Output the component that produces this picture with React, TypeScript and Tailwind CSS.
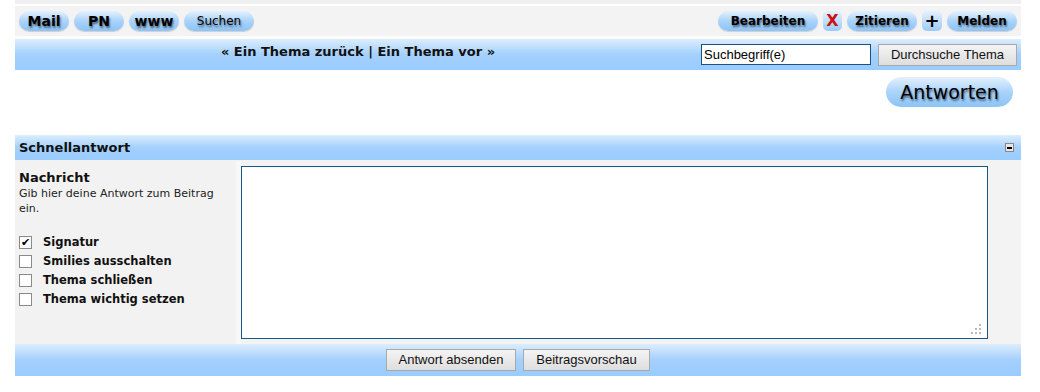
import React from 'react';

const pill =
  "h-[20px] rounded-full bg-gradient-to-b from-[#e4f1fd] via-[#a9d3fb] to-[#8cc4f7] shadow-[0_1px_1px_rgba(0,0,0,0.15)] flex items-center justify-center font-bold text-[12px] text-black [text-shadow:1px_2px_2px_#4f6378]";

const grayBtn =
  "h-[22px] border border-[#a9a9a9] bg-gradient-to-b from-[#f4f4f4] to-[#dedede] text-[13px] text-[#111] flex items-center justify-center";

const blueBar = "bg-gradient-to-b from-[#dcedfd] via-[#a4d0fc] to-[#99ccff]";

function Check({ checked }: { checked?: boolean }) {
  return (
    <span className="w-[13px] h-[13px] border border-[#8a8a8a] bg-white flex items-center justify-center text-[11px] leading-none text-black shrink-0">
      {checked ? "✔" : ""}
    </span>
  );
}

export default function App() {
  const options = [
    { label: "Signatur", checked: true },
    { label: "Smilies ausschalten" },
    { label: "Thema schließen" },
    { label: "Thema wichtig setzen" },
  ];

  return (
    <div className="min-h-[392px] bg-white" style={{ fontFamily: '"DejaVu Sans", Verdana, sans-serif' }}>
      <div className="w-[1006px] ml-[15px]">
        {/* top toolbar */}
        <div className="h-[4px] bg-[#efefef]"></div>
        <div className="h-[2px] bg-white"></div>
        <div className="h-[30px] bg-[#f3f3f3] flex items-center justify-between pl-[4px] pr-[4px]">
          <div className="flex items-center gap-[5px]">
            <div className={pill + " w-[50px] text-[14px]"}>Mail</div>
            <div className={pill + " w-[50px] text-[14px]"}>PN</div>
            <div className={pill + " w-[50px] text-[14px]"}>www</div>
            <div className={pill + " w-[70px] !font-normal"}>Suchen</div>
          </div>
          <div className="flex items-center gap-[5px]">
            <div className={pill + " w-[100px]"}>Bearbeiten</div>
            <div className="w-[19px] h-[20px] rounded-[5px] bg-gradient-to-b from-[#e4f1fd] to-[#9ccbf7] flex items-center justify-center text-[#cc1111] font-bold text-[16px]">
              X
            </div>
            <div className={pill + " w-[70px]"}>Zitieren</div>
            <div className="w-[20px] h-[20px] rounded-[5px] bg-gradient-to-b from-[#e4f1fd] to-[#9ccbf7] flex items-center justify-center text-black font-bold text-[18px] leading-none">
              +
            </div>
            <div className={pill + " w-[70px]"}>Melden</div>
          </div>
        </div>
        <div className="h-[3px] bg-white"></div>

        {/* navigation bar */}
        <div className={blueBar + " h-[31px] flex items-center"}>
          <div className="w-[686px] flex justify-center font-bold text-[13px] text-[#111] pt-[1px] pb-[6px]">
            « Ein Thema zurück | Ein Thema vor »
          </div>
          <div
            className="flex items-center gap-[7px]"
            style={{ fontFamily: '"Liberation Sans", Arial, sans-serif' }}
          >
            <div className="w-[170px] h-[21px] border border-[#1f4f7f] bg-white text-[13px] text-black pl-[2px] flex items-center">
              Suchbegriff(e)
            </div>
            <div className={grayBtn + " w-[139px]"}>Durchsuche Thema</div>
          </div>
        </div>

        {/* reply button */}
        <div className="h-[65px] flex justify-end items-start pt-[7px] pr-[8px]">
          <div className="w-[127px] h-[30px] rounded-full bg-gradient-to-b from-[#e4f1fd] via-[#a9d3fb] to-[#8cc4f7] flex items-center justify-center text-[19px] text-black [text-shadow:1px_2px_2px_#4f6378]">
            Antworten
          </div>
        </div>

        {/* quick reply header */}
        <div className={blueBar + " h-[25px] flex items-center justify-between pl-[4px] pr-[7px]"}>
          <span className="font-bold text-[13px] text-[#111]">Schnellantwort</span>
          <span className="w-[9px] h-[9px] border border-[#888] bg-[#e6e6e6] flex items-center justify-center">
            <span className="w-[5px] h-[2px] bg-black"></span>
          </span>
        </div>

        {/* body */}
        <div className="flex bg-[#f3f3f3] h-[184px] pt-[1px]">
          <div className="w-[221px] bg-[#f2f2f2] pl-[4px] pt-[9px]">
            <div className="font-bold text-[13px] text-[#111] leading-[16px]">Nachricht</div>
            <div className="text-[11px] text-[#222] leading-[15px] pr-[4px]">
              Gib hier deine Antwort zum Beitrag ein.
            </div>
            <div className="flex flex-col gap-[6px] mt-[20px]">
              {options.map((o) => (
                <div key={o.label} className="flex items-center gap-[11px] h-[13px]">
                  <Check checked={o.checked} />
                  <span className="font-bold text-[11.5px] text-[#111]">{o.label}</span>
                </div>
              ))}
            </div>
          </div>
          <div className="w-[5px] bg-[#f8f8f8]"></div>
          <div className="pt-[5px]">
            <div className="relative w-[747px] h-[173px] border border-[#14578a] bg-white">
              <div className="absolute right-[6px] bottom-[4px] grid grid-cols-3 gap-[2px]">
                <span></span>
                <span></span>
                <span className="w-[2px] h-[2px] bg-[#bbb]"></span>
                <span></span>
                <span className="w-[2px] h-[2px] bg-[#bbb]"></span>
                <span className="w-[2px] h-[2px] bg-[#bbb]"></span>
                <span className="w-[2px] h-[2px] bg-[#bbb]"></span>
                <span className="w-[2px] h-[2px] bg-[#bbb]"></span>
                <span className="w-[2px] h-[2px] bg-[#bbb]"></span>
              </div>
            </div>
          </div>
        </div>

        {/* submit bar */}
        <div
          className={blueBar + " h-[32px] flex items-center justify-center gap-[7px]"}
          style={{ fontFamily: '"Liberation Sans", Arial, sans-serif' }}
        >
          <div className={grayBtn + " w-[130px]"}>Antwort absenden</div>
          <div className={grayBtn + " w-[127px]"}>Beitragsvorschau</div>
        </div>
      </div>
    </div>
  );
}
